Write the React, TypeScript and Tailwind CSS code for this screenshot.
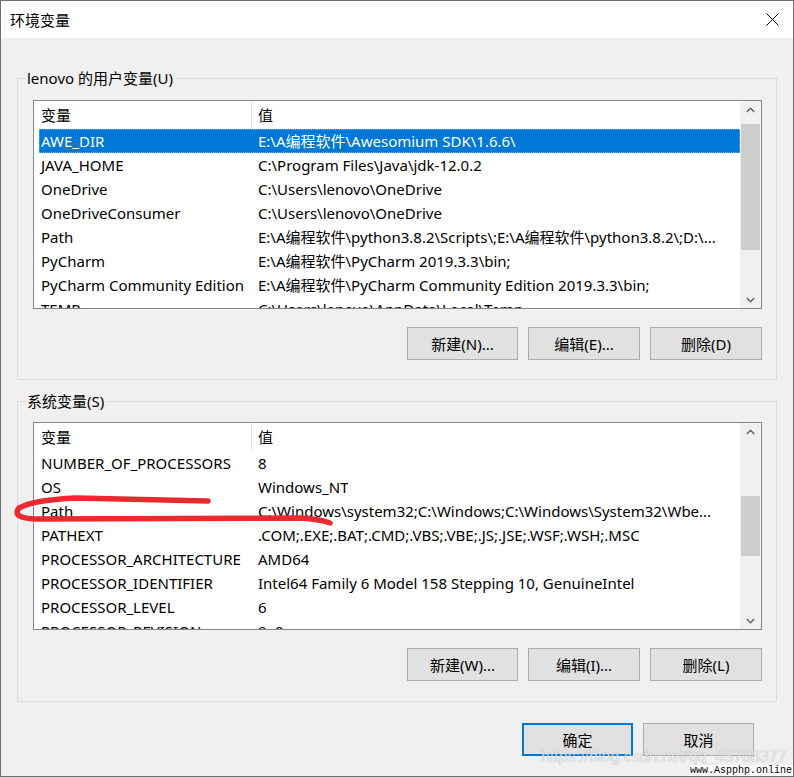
import React from "react";

const FONT = '"Noto Sans", "Noto Sans CJK SC", sans-serif';

type Row = [string, string];

const userRows: Row[] = [
  ["AWE_DIR", "E:\\A编程软件\\Awesomium SDK\\1.6.6\\"],
  ["JAVA_HOME", "C:\\Program Files\\Java\\jdk-12.0.2"],
  ["OneDrive", "C:\\Users\\lenovo\\OneDrive"],
  ["OneDriveConsumer", "C:\\Users\\lenovo\\OneDrive"],
  ["Path", "E:\\A编程软件\\python3.8.2\\Scripts\\;E:\\A编程软件\\python3.8.2\\;D:\\..."],
  ["PyCharm", "E:\\A编程软件\\PyCharm 2019.3.3\\bin;"],
  ["PyCharm Community Edition", "E:\\A编程软件\\PyCharm Community Edition 2019.3.3\\bin;"],
  ["TEMP", "C:\\Users\\lenovo\\AppData\\Local\\Temp"],
];

const sysRows: Row[] = [
  ["NUMBER_OF_PROCESSORS", "8"],
  ["OS", "Windows_NT"],
  ["Path", "C:\\Windows\\system32;C:\\Windows;C:\\Windows\\System32\\Wbe..."],
  ["PATHEXT", ".COM;.EXE;.BAT;.CMD;.VBS;.VBE;.JS;.JSE;.WSF;.WSH;.MSC"],
  ["PROCESSOR_ARCHITECTURE", "AMD64"],
  ["PROCESSOR_IDENTIFIER", "Intel64 Family 6 Model 158 Stepping 10, GenuineIntel"],
  ["PROCESSOR_LEVEL", "6"],
  ["PROCESSOR_REVISION", "9e0a"],
];

function Chevron({ up }: { up?: boolean }) {
  return (
    <svg width="9" height="6" viewBox="0 0 9 6">
      {up ? (
        <path d="M0.8 5 L4.5 1.3 L8.2 5" fill="none" stroke="#606060" strokeWidth="1.4" />
      ) : (
        <path d="M0.8 1 L4.5 4.7 L8.2 1" fill="none" stroke="#606060" strokeWidth="1.4" />
      )}
    </svg>
  );
}

function ListView({
  rows,
  selected,
  height,
  thumbTop,
  thumbHeight,
}: {
  rows: Row[];
  selected?: number;
  height: string;
  thumbTop: string;
  thumbHeight: string;
}) {
  return (
    <div className={`ml-[15px] w-[729px] ${height} border border-[#828790] bg-white flex`}>
      <div className="flex-1 flex flex-col overflow-hidden">
        <div className="h-[28px] flex items-center shrink-0 text-black">
          <div className="w-[218px] h-full pl-[7px] flex items-center border-r border-[#e5e5e5]">变量</div>
          <div className="pl-[6px]">值</div>
        </div>
        {rows.map((r, i) => {
          const sel = i === selected;
          return (
            <div
              key={i}
              className={`ml-[5px] h-[24px] shrink-0 flex items-center whitespace-nowrap ${
                sel
                  ? "bg-[#0078d7] text-white outline outline-1 outline-dotted outline-[#6fb2ea] -outline-offset-1"
                  : "text-black"
              }`}
            >
              <div className="w-[213px] pl-[2px] overflow-hidden">{r[0]}</div>
              <div className="pl-[6px] overflow-hidden">{r[1]}</div>
            </div>
          );
        })}
      </div>
      <div className="w-[21px] h-full bg-[#f0f0f0] flex flex-col">
        <div className="h-[17px] flex items-center justify-center shrink-0">
          <Chevron up />
        </div>
        <div className="flex-1 relative">
          <div className={`${thumbTop} ${thumbHeight} mx-[1px] bg-[#cdcdcd]`} />
        </div>
        <div className="h-[17px] flex items-center justify-center shrink-0">
          <Chevron />
        </div>
      </div>
    </div>
  );
}

function Btn({ children, w, primary }: { children: React.ReactNode; w: string; primary?: boolean }) {
  return (
    <div
      className={`${w} h-[33px] flex items-center justify-center bg-[#e1e1e1] text-black ${
        primary ? "border-2 border-[#0078d7]" : "border border-[#adadad]"
      }`}
    >
      {children}
    </div>
  );
}

export default function App() {
  return (
    <div
      className="w-[794px] h-[777px] relative overflow-hidden bg-[#f0f0f0] border border-[#6e6e6e] flex flex-col text-[15px] leading-[20px]"
      style={{ fontFamily: FONT }}
    >
      {/* title bar */}
      <div className="h-[37px] bg-white flex items-center justify-between pl-[9px] pr-[14px] shrink-0">
        <span className="text-black">环境变量</span>
        <svg width="13" height="13" viewBox="0 0 13 13">
          <path d="M0.5 0.5 L12.5 12.5 M12.5 0.5 L0.5 12.5" stroke="#000" strokeWidth="1" />
        </svg>
      </div>

      {/* user variables */}
      <fieldset className="ml-[16px] mt-[30px] w-[760px] h-[312px] border border-[#dcdcdc] flex flex-col">
        <legend className="ml-[7px] px-[2px] leading-[20px] text-black">lenovo 的用户变量(U)</legend>
        <div className="mt-[12px]">
          <ListView rows={userRows} selected={0} height="h-[209px]" thumbTop="mt-[6px]" thumbHeight="h-[126px]" />
        </div>
        <div className="mt-[18px] flex justify-end gap-[10px] pr-[14px]">
          <Btn w="w-[111px]">新建(N)...</Btn>
          <Btn w="w-[112px]">编辑(E)...</Btn>
          <Btn w="w-[112px]">删除(D)</Btn>
        </div>
      </fieldset>

      {/* system variables */}
      <fieldset className="ml-[16px] mt-[11px] w-[760px] h-[311px] border border-[#dcdcdc] flex flex-col">
        <legend className="ml-[7px] px-[2px] leading-[20px] text-black">系统变量(S)</legend>
        <div className="mt-[11px]">
          <ListView rows={sysRows} height="h-[208px]" thumbTop="mt-[56px]" thumbHeight="h-[60px]" />
        </div>
        <div className="mt-[18px] flex justify-end gap-[10px] pr-[14px]">
          <Btn w="w-[111px]">新建(W)...</Btn>
          <Btn w="w-[112px]">编辑(I)...</Btn>
          <Btn w="w-[112px]">删除(L)</Btn>
        </div>
      </fieldset>

      {/* OK / Cancel */}
      <div className="mt-[21px] flex justify-end gap-[10px] pr-[39px]">
        <Btn w="w-[111px]" primary>
          确定
        </Btn>
        <Btn w="w-[111px]">取消</Btn>
      </div>

      {/* red hand-drawn underline */}
      <svg className="absolute left-0 top-0 pointer-events-none" width="794" height="777" viewBox="0 0 794 777">
        <path
          d="M207 500 L75 497 Q32 499 18 507 Q10 517 35 518 L300 517 Q318 518 329 522"
          fill="none"
          stroke="#ea2a2f"
          strokeWidth="5.5"
          strokeLinecap="round"
          strokeLinejoin="round"
        />
      </svg>

      {/* watermarks */}
      <div
        className="absolute left-[540px] top-[746px] text-[16px] leading-[20px] text-[rgba(255,255,255,0.75)] whitespace-nowrap"
        style={{ fontFamily: '"Liberation Sans", sans-serif', textShadow: "0 0 1px rgba(0,0,0,0.35)" }}
      >
        https://blog.csdn.net/qq_45708377
      </div>
      <div
        className="absolute right-0 bottom-0 bg-white px-[1px] text-[10px] leading-[11px] text-black whitespace-nowrap"
        style={{ fontFamily: '"Liberation Mono", monospace' }}
      >
        www.Aspphp.online
      </div>
    </div>
  );
}
